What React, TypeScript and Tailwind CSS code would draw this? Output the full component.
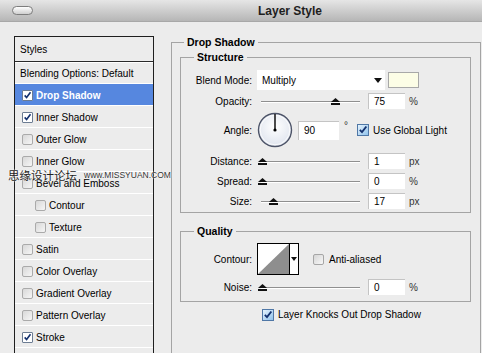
import React from "react";

const styleItems: { label: string; checked?: boolean; sub?: boolean; active?: boolean }[] = [
  { label: "Drop Shadow", checked: true, active: true },
  { label: "Inner Shadow", checked: true },
  { label: "Outer Glow" },
  { label: "Inner Glow" },
  { label: "Bevel and Emboss" },
  { label: "Contour", sub: true },
  { label: "Texture", sub: true },
  { label: "Satin" },
  { label: "Color Overlay" },
  { label: "Gradient Overlay" },
  { label: "Pattern Overlay" },
  { label: "Stroke", checked: true },
  { label: "" },
];

function Check({ className = "" }: { className?: string }) {
  return (
    <svg viewBox="0 0 12 12" className={className}>
      <path d="M2.2 5.8 L4.8 8.6 L10 1.8" fill="none" stroke="#13306e" strokeWidth="2.2" />
    </svg>
  );
}

function PanelBox({ checked }: { checked?: boolean }) {
  return checked ? (
    <span className="flex h-[11px] w-[11px] items-center justify-center rounded-[1px] border border-[#6c7c92] bg-white">
      <Check className="h-[9px] w-[9px]" />
    </span>
  ) : (
    <span className="h-[11px] w-[11px] rounded-[2px] border border-[#aaaaaa] bg-gradient-to-br from-[#d8d8d8] to-[#f6f6f6]" />
  );
}

function BlueBox({ checked }: { checked?: boolean }) {
  return checked ? (
    <span className="flex h-[12px] w-[12px] items-center justify-center border border-[#4f77a6] bg-gradient-to-br from-[#e6f3fc] to-[#8fc2ec]">
      <Check className="h-[10px] w-[10px]" />
    </span>
  ) : (
    <span className="h-[11px] w-[11px] rounded-[2px] border border-[#a6a6a6] bg-gradient-to-br from-[#d6d6d6] to-[#f8f8f8]" />
  );
}

function Knob({ left }: { left: number }) {
  return (
    <svg
      width="9"
      height="7"
      viewBox="0 0 9 7"
      className="absolute top-[5px]"
      style={{ left }}
    >
      <polygon points="0,4 4.5,0 9,4" fill="#111" />
      <rect x="0" y="5" width="9" height="2" fill="#111" />
    </svg>
  );
}

function Slider({ knob }: { knob: number }) {
  return (
    <div className="relative h-[16px] w-[103px]">
      <div className="absolute left-[4px] right-0 top-[8px] h-[2px] border-t border-[#8f8f8f] bg-white" />
      <Knob left={knob} />
    </div>
  );
}

function NumBox({ value, w = "w-[37px]" }: { value: string; w?: string }) {
  return (
    <div className={`${w} flex h-[16px] items-center border-t border-l border-[#c4c4c4] bg-white pl-[5px]`}>
      {value}
    </div>
  );
}

function SliderRow({ label, knob, value, unit }: { label: string; knob: number; value: string; unit: string }) {
  return (
    <div className="flex h-[16px] items-center">
      <div className="w-[72px] pr-[1px] text-right">{label}</div>
      <div className="ml-[4px]">
        <Slider knob={knob} />
      </div>
      <div className="ml-[8px]">
        <NumBox value={value} />
      </div>
      <span className="ml-[4px] text-[#333]">{unit}</span>
    </div>
  );
}

export default function App() {
  return (
    <div className="relative h-[353px] w-[482px] overflow-hidden bg-[#ececec] font-['Liberation_Sans',Arial,sans-serif] text-[10px] text-black">
      {/* title bar */}
      <div className="flex h-[22px] items-center border-b border-[#a8a8a8] bg-gradient-to-b from-[#e6e6e6] to-[#b6b6b6]">
        <div className="ml-[12px] h-[9px] w-[21px] rounded-full border border-[#7d7d7d] bg-gradient-to-b from-white to-[#cfcfcf]" />
        <div className="ml-[225px] text-[12px] font-bold text-[#1e1e1e]">Layer Style</div>
      </div>

      <div className="flex">
        {/* styles list */}
        <div className="ml-[14px] mt-[14px] w-[140px] border border-[#1f1f1f] bg-[#ececec]">
          <div className="flex h-[25px] items-center border-b border-[#2a2a2a] pl-[5px]">Styles</div>
          <div className="flex h-[22px] items-center border-t border-b border-white pl-[5px] pt-[1px]">
            Blending Options: Default
          </div>
          {styleItems.map((item, i) => (
            <div
              key={i}
              className={`flex h-[22px] items-center gap-[2px] border-b border-white pt-[1px] ${
                item.sub ? "pl-[20px]" : "pl-[7px]"
              } ${item.active ? "bg-[#5687df] font-bold text-white" : ""}`}
            >
              {item.label && <PanelBox checked={item.checked} />}
              <span className="ml-[1px]">{item.label}</span>
            </div>
          ))}
        </div>

        {/* settings */}
        <fieldset className="ml-[17px] mt-[14px] h-[340px] w-[310px] border border-[#a4a4a4]">
          <legend className="ml-[12px] px-[3px] text-[10.5px] font-bold leading-[13px]">Drop Shadow</legend>

          <fieldset className="ml-[8px] mt-[2px] w-[291px] border border-[#a4a4a4] px-0 pb-[3px] pt-[6px]">
            <legend className="ml-[13px] px-[3px] text-[10.5px] font-bold leading-[13px]">Structure</legend>

            <div className="flex h-[20px] items-center">
              <div className="w-[72px] pr-[1px] text-right">Blend Mode:</div>
              <div className="ml-[4px] flex h-[20px] w-[128px] items-center justify-between bg-white pl-[5px] pr-[3px]">
                <span>Multiply</span>
                <svg width="8" height="5" viewBox="0 0 8 5">
                  <polygon points="0,0 8,0 4,5" fill="#111" />
                </svg>
              </div>
              <div className="ml-[3px] h-[16px] w-[31px] border border-[#a8a8a8] bg-[#fcfde6]" />
            </div>

            <div className="mt-[3px]">
              <SliderRow label="Opacity:" knob={74} value="75" unit="%" />
            </div>

            <div className="mt-[4px] flex h-[34px] items-center">
              <div className="w-[72px] pr-[1px] text-right">Angle:</div>
              <svg width="36" height="36" viewBox="0 0 36 36" className="ml-[4px]">
                <defs>
                  <radialGradient id="dial" cx="50%" cy="40%" r="60%">
                    <stop offset="0%" stopColor="#ffffff" />
                    <stop offset="100%" stopColor="#dfe4ee" />
                  </radialGradient>
                </defs>
                <circle cx="18" cy="18" r="16.5" fill="url(#dial)" stroke="#4d5468" strokeWidth="1.4" />
                <circle cx="18" cy="18" r="14.8" fill="none" stroke="#ffffff" strokeWidth="0.8" />
                <line x1="18" y1="18" x2="18" y2="2" stroke="#000" strokeWidth="1.4" />
                <circle cx="18" cy="18" r="1.6" fill="#000" />
              </svg>
              <div className="ml-[5px]">
                <NumBox value="90" w="w-[41px] h-[19px]" />
              </div>
              <span className="ml-[5px] -mt-[10px] text-[#333]">°</span>
              <div className="ml-[9px] flex items-center gap-[4px]">
                <BlueBox checked />
                <span>Use Global Light</span>
              </div>
            </div>

            <div className="mt-[6px] flex flex-col gap-[4px]">
              <SliderRow label="Distance:" knob={1} value="1" unit="px" />
              <SliderRow label="Spread:" knob={1} value="0" unit="%" />
              <SliderRow label="Size:" knob={12} value="17" unit="px" />
            </div>
          </fieldset>

          <fieldset className="ml-[8px] mt-[12px] w-[291px] border border-[#a4a4a4] px-0 pb-[6px] pt-[5px]">
            <legend className="ml-[13px] px-[3px] text-[10.5px] font-bold leading-[13px]">Quality</legend>

            <div className="flex h-[32px] items-center">
              <div className="w-[72px] pr-[1px] text-right">Contour:</div>
              <div className="ml-[4px] flex h-[32px] w-[42px] border border-black bg-white">
                <svg width="31" height="30" viewBox="0 0 31 30" className="block">
                  <polygon points="0,30 31,0 31,30" fill="#8e8e8e" />
                </svg>
                <div className="flex flex-1 items-center justify-center border-l border-black">
                  <svg width="6" height="4" viewBox="0 0 6 4">
                    <polygon points="0,0 6,0 3,4" fill="#111" />
                  </svg>
                </div>
              </div>
              <div className="ml-[14px] flex items-center gap-[5px]">
                <BlueBox />
                <span>Anti-aliased</span>
              </div>
            </div>

            <div className="mt-[4px]">
              <SliderRow label="Noise:" knob={1} value="0" unit="%" />
            </div>
          </fieldset>

          <div className="mt-[5px] flex items-center gap-[4px] pl-[90px]">
            <BlueBox checked />
            <span>Layer Knocks Out Drop Shadow</span>
          </div>
        </fieldset>
      </div>

      {/* watermark */}
      <div className="absolute left-[8px] top-[167px] flex items-center gap-[7px] [text-shadow:0_0_2px_#fff,0_0_1px_#fff]">
        <span className="font-['Noto_Sans_CJK_SC',sans-serif] text-[11.5px] text-[#222]">思缘设计论坛</span>
        <span className="text-[8.5px] text-[#333]">www.MISSYUAN.COM</span>
      </div>
    </div>
  );
}
